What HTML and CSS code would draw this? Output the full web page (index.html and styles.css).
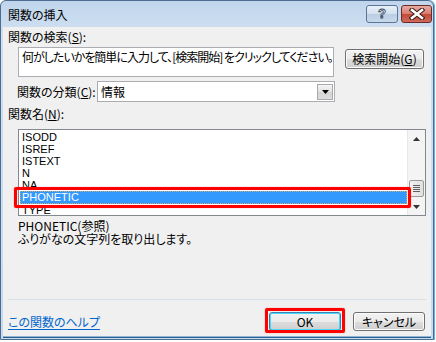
FILE: index.html
```html
<!DOCTYPE html>
<html lang="ja">
<head>
<meta charset="utf-8">
<title>関数の挿入</title>
<link rel="stylesheet" href="styles.css">
</head>
<body>
<div class="window">
  <div class="titlebar">
    <div class="title">関数の挿入</div>
    <div class="tbuttons">
      <div class="tb help"><span class="qm">?</span></div>
      <div class="tb close">
        <svg width="16" height="12" viewBox="0 0 16 12">
          <path d="M3 2 L13 10 M13 2 L3 10" stroke="#3a1a14" stroke-width="4.6" stroke-linecap="square"/>
          <path d="M3 2 L13 10 M13 2 L3 10" stroke="#ffffff" stroke-width="2.6" stroke-linecap="square"/>
        </svg>
      </div>
    </div>
  </div>
  <div class="client">
    <div class="label first">関数の検索(<u>S</u>):</div>
    <div class="search-row">
      <div class="field">何がしたいかを簡単に入力して、[検索開始] をクリックしてください。</div>
      <div class="btn search-btn">検索開始(<u>G</u>)</div>
    </div>
    <div class="cat-row">
      <div class="cat-label">関数の分類(<u>C</u>):</div>
      <div class="select">
        <span class="sel-text">情報</span>
        <span class="drop"><svg width="7" height="4" viewBox="0 0 7 4"><path d="M0 0 H7 L3.5 4 Z" fill="#000"/></svg></span>
      </div>
    </div>
    <div class="label name-label">関数名(<u>N</u>):</div>
    <div class="listwrap">
      <div class="listbox">
        <div class="items">
          <div class="item">ISODD</div>
          <div class="item">ISREF</div>
          <div class="item">ISTEXT</div>
          <div class="item">N</div>
          <div class="item">NA</div>
          <div class="item selected"><span class="focus">PHONETIC</span></div>
          <div class="item">TYPE</div>
        </div>
        <div class="scrollbar">
          <div class="sb-btn"><svg width="7" height="4" viewBox="0 0 7 4"><path d="M0 4 H7 L3.5 0 Z" fill="#333"/></svg></div>
          <div class="sb-track">
            <div class="thumb">
              <span class="grip"></span><span class="grip"></span><span class="grip"></span><span class="grip"></span>
            </div>
          </div>
          <div class="sb-btn"><svg width="7" height="4" viewBox="0 0 7 4"><path d="M0 0 H7 L3.5 4 Z" fill="#333"/></svg></div>
        </div>
      </div>
      <div class="mark mark-list"></div>
    </div>
    <div class="desc">
      <div>PHONETIC(参照)</div>
      <div>ふりがなの文字列を取り出します。</div>
    </div>
    <div class="sep"></div>
    <div class="footer">
      <a class="help-link" href="#">この関数のヘルプ</a>
      <div class="buttons">
        <div class="okwrap">
          <div class="btn ok">OK</div>
          <div class="mark mark-ok"></div>
        </div>
        <div class="btn cancel">キャンセル</div>
      </div>
    </div>
  </div>
</div>
</body>
</html>
```

FILE: styles.css
```css
html, body {
  margin: 0;
  padding: 0;
  background: #ffffff;
}
body {
  font-family: "Noto Sans CJK JP", "Liberation Sans", sans-serif;
  font-size: 12px;
  color: #000;
  font-feature-settings: "palt";
}
u { text-decoration: underline; text-underline-offset: 1px; }

.window {
  width: 432px;
  height: 338px;
  border: 1px solid #4a6d8f;
  border-radius: 6px 6px 0 0;
  background: linear-gradient(#c0d5ec, #cfdff1 30px, #c6dbef);
  display: flex;
  flex-direction: column;
  box-shadow: 1px 0 0 #5ab9e8;
}
.titlebar {
  height: 26px;
  display: flex;
  align-items: flex-start;
  justify-content: space-between;
  flex: none;
}
.title {
  margin: 6px 0 0 7px;
  line-height: 16px;
  font-size: 12px;
  color: #000;
}
.tbuttons {
  display: flex;
  gap: 3px;
  margin: 4px 1px 0 0;
}
.tb {
  height: 16px;
  border: 1px solid #5a7595;
  border-radius: 3px;
  display: flex;
  align-items: center;
  justify-content: center;
}
.help {
  width: 30px;
  background: linear-gradient(#e9f0f8, #d2e0ef 50%, #b9cde3 51%, #c9d9eb);
}
.qm {
  font-family: "Liberation Sans", sans-serif;
  font-weight: bold;
  font-size: 13px;
  line-height: 14px;
  color: #fff;
  -webkit-text-stroke: 0.8px #2b3d55;
}
.close {
  width: 29px;
  border-color: #6b2a22;
  background: linear-gradient(#e6aca3, #d77a6d 50%, #c2493a 51%, #cf6a5c);
}

.client {
  flex: 1;
  margin: 0 2px 2px 2px;
  background: #f0f0f0;
  padding: 0 6px 0 5px;
  display: flex;
  flex-direction: column;
  border-bottom: 1px solid #8fb4d6;
  box-shadow: 0 1px 0 #2c5f8a;
}
.label {
  line-height: 14px;
}
.first { margin-top: 3px; }

.search-row {
  display: flex;
  align-items: flex-start;
  gap: 11px;
  margin: 3px 0 0 10px;
}
.field {
  width: 311px;
  height: 28px;
  border: 1px solid #abadb3;
  background: #fff;
  padding: 0 0 0 3px;
  line-height: 18px;
  white-space: nowrap;
  overflow: hidden;
  letter-spacing: -1px;
}
.btn {
  box-sizing: border-box;
  height: 20px;
  border: 1px solid #707070;
  border-radius: 3px;
  background: linear-gradient(#f2f2f2, #ebebeb 50%, #dddddd 51%, #cfcfcf);
  box-shadow: inset 0 0 0 1px #fcfcfc;
  display: flex;
  align-items: center;
  justify-content: center;
  line-height: 16px;
}
.search-btn {
  width: 79px;
  margin-top: 2px;
}

.cat-row {
  display: flex;
  margin: 4px 0 0 9px;
  align-items: center;
}
.cat-label {
  width: 80px;
  line-height: 21px;
}
.select {
  box-sizing: border-box;
  width: 238px;
  height: 21px;
  border: 1px solid #abadb3;
  background: #fff;
  display: flex;
  align-items: center;
  justify-content: space-between;
}
.sel-text {
  padding-left: 3px;
}
.drop {
  box-sizing: border-box;
  width: 16px;
  height: 16px;
  margin-right: 1px;
  border: 1px solid #a9a9a9;
  background: linear-gradient(#f4f4f4, #e2e2e2 50%, #d4d4d4 51%, #dcdcdc);
  display: flex;
  align-items: center;
  justify-content: center;
}

.name-label { margin-top: 5px; }

.listwrap {
  position: relative;
  margin: 8px 0 0 10px;
  width: 408px;
}
.listbox {
  box-sizing: border-box;
  width: 408px;
  height: 87px;
  border: 1px solid #828790;
  background: #fff;
  display: flex;
}
.items {
  flex: 1;
  padding-top: 1px;
  overflow: hidden;
}
.item {
  height: 12px;
  line-height: 12px;
  padding-left: 3px;
  font-family: "Liberation Sans", sans-serif;
  font-size: 11px;
  white-space: nowrap;
}
.item.selected {
  background: #3399ff;
  color: #fff;
  margin-left: 1px;
  box-sizing: border-box;
  height: 13px;
  border: 1px dotted #d3a86a;
  line-height: 11px;
  padding-left: 1px;
}
.scrollbar {
  width: 17px;
  background: #f4f4f4;
  border-left: 1px solid #e8e8e8;
  display: flex;
  flex-direction: column;
}
.sb-btn {
  height: 17px;
  display: flex;
  align-items: center;
  justify-content: center;
}
.sb-track {
  flex: 1;
  display: flex;
  flex-direction: column;
  justify-content: flex-end;
  align-items: center;
}
.thumb {
  box-sizing: border-box;
  width: 15px;
  height: 17px;
  border: 1px solid #9a9a9a;
  border-radius: 2px;
  background: linear-gradient(90deg, #f2f2f2, #e0e0e0);
  display: flex;
  flex-direction: column;
  align-items: center;
  justify-content: center;
  gap: 1px;
  margin-bottom: 1px;
}
.grip {
  width: 7px;
  height: 1px;
  background: #606060;
}

.mark {
  position: absolute;
  box-sizing: border-box;
  border: 3px solid #ff0000;
  border-radius: 2px;
  box-shadow: 0 0 1px #ff4040;
  pointer-events: none;
}
.mark-list {
  left: -4px;
  top: 58px;
  width: 397px;
  height: 21px;
}

.desc {
  margin: 3px 0 0 10px;
  line-height: 13px;
}

.sep {
  margin-top: 54px;
  width: 418px;
  height: 1px;
  background: #d5dfe5;
}

.footer {
  display: flex;
  justify-content: space-between;
  align-items: center;
  margin-top: 12px;
}
.help-link {
  color: #0066cc;
  text-decoration: underline;
  text-underline-offset: 2px;
  line-height: 16px;
}
.buttons {
  display: flex;
  gap: 12px;
}
.okwrap {
  position: relative;
}
.ok, .cancel {
  width: 72px;
  height: 19px;
}
.ok {
  border-color: #3c7fb1;
  box-shadow: inset 0 0 0 1px #48d7fb;
}
.mark-ok {
  left: -4px;
  top: -4px;
  width: 80px;
  height: 25px;
}
```
